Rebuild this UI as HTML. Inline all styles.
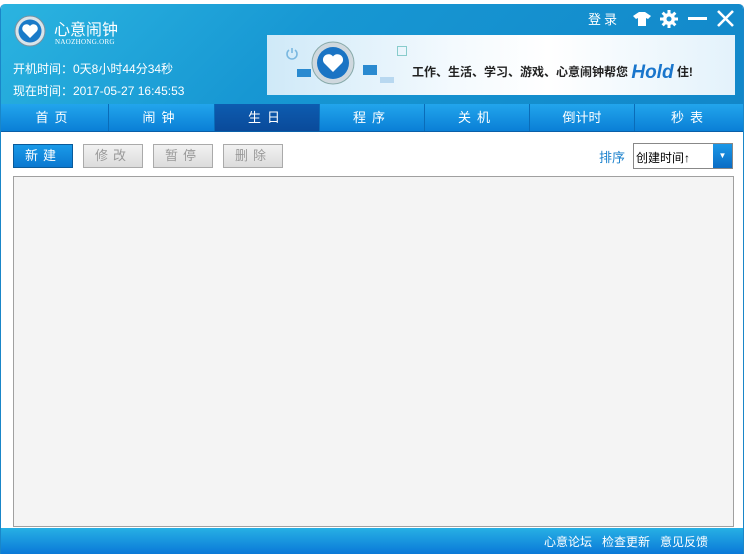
<!DOCTYPE html>
<html><head><meta charset="utf-8"><style>
*{margin:0;padding:0;box-sizing:border-box}
body{width:747px;height:560px;background:#fff;font-family:"Liberation Sans","Noto Sans CJK SC",sans-serif;font-size:12px;position:relative;overflow:hidden}
.win{position:absolute;left:0;top:4px;width:744px;height:550px;border-radius:5px 5px 0 0;overflow:hidden;background:#fff;border-left:1px solid #1a86c8;border-right:1px solid #1a86c8}
.hdr{position:absolute;left:0;top:0;width:100%;height:100px;background:linear-gradient(135deg,#2bb4e0 0%,#1797d3 40%,#1287c9 100%)}
.t{position:absolute;color:#fff;white-space:nowrap}
.banner{position:absolute;left:266px;top:31px;width:468px;height:60px;background:linear-gradient(90deg,#cfe9f8 0%,#f4fafe 40%,#ffffff 60%,#e3f2fb 100%)}
.tabs{position:absolute;left:0;top:100px;width:100%;height:28px;background:linear-gradient(#22a5ec,#0a7fd6);border-bottom:1px solid #0a5fa8}
.tab{position:absolute;top:0;height:27px;line-height:27px;text-align:center;color:#fff;font-size:13px;border-left:1px solid #0a6cb8;letter-spacing:6px}
.btn{position:absolute;top:140px;width:60px;height:24px;line-height:22px;text-align:center;border:1px solid #aaa;background:linear-gradient(#f2f2f2,#dcdcdc);color:#999;font-size:13px;letter-spacing:5px}
.foot{position:absolute;left:0;top:524px;width:100%;height:26px;background:linear-gradient(#27b0e4,#0a79d8)}
</style></head><body>
<div class="win">
<div class="hdr"></div>
<svg style="position:absolute;left:13px;top:11px" width="32" height="32"><circle cx="16" cy="16" r="15" fill="#d8e4ea" stroke="#7890a0"/><circle cx="16" cy="16" r="11.5" fill="#1a7ac8"/><path d="M16 23 L9 16 A3.6 3.6 0 0 1 16 11 A3.6 3.6 0 0 1 23 16 Z" fill="#fff"/></svg>
<div class="t" style="left:53px;top:12px;font-size:16px">心意闹钟</div>
<div class="t" style="left:54px;top:34px;font-size:7px;font-family:'Liberation Serif',serif;letter-spacing:0.3px">NAOZHONG.ORG</div>
<div class="t" style="left:12px;top:56px">开机时间：0天8小时44分34秒</div>
<div class="t" style="left:12px;top:78px">现在时间：2017-05-27 16:45:53</div>
<div class="t" style="left:587px;top:5px;font-size:13px;letter-spacing:3px">登录</div>
<svg style="position:absolute;left:632px;top:8px" width="18" height="14"><path d="M6 0 L12 0 L18 4 L15 7 L13 6 L13 14 L5 14 L5 6 L3 7 L0 4 Z" fill="#fff"/></svg>
<svg style="position:absolute;left:659px;top:6px" width="18" height="18" viewBox="0 0 18 18"><g fill="#fff"><circle cx="9" cy="9" r="6"/><rect x="7.5" y="0" width="3" height="18"/><rect x="0" y="7.5" width="18" height="3"/><rect x="7.5" y="0" width="3" height="18" transform="rotate(45 9 9)"/><rect x="7.5" y="0" width="3" height="18" transform="rotate(-45 9 9)"/></g><circle cx="9" cy="9" r="2.5" fill="#1a8fd0"/></svg>
<div style="position:absolute;left:687px;top:13px;width:19px;height:3px;background:#fff"></div>
<svg style="position:absolute;left:716px;top:6px" width="17" height="17"><path d="M1 1 L16 16 M16 1 L1 16" stroke="#fff" stroke-width="2.6"/></svg>
<div class="banner">
<svg style="position:absolute;left:44px;top:6px" width="44" height="44"><circle cx="22" cy="22" r="21" fill="#cfd8de" stroke="#8aa"/><circle cx="22" cy="22" r="16" fill="#1a74c4"/><path d="M22 31 L13 22 A4.8 4.8 0 0 1 22 15.5 A4.8 4.8 0 0 1 31 22 Z" fill="#fff"/></svg>
<svg style="position:absolute;left:18px;top:12px" width="14" height="14"><path d="M4 3 A5 5 0 1 0 10 3 M7 1 L7 6" stroke="#7ab8e0" stroke-width="1.6" fill="none"/></svg>
<div style="position:absolute;left:30px;top:34px;width:14px;height:8px;background:#2a8ad0"></div>
<div style="position:absolute;left:96px;top:30px;width:14px;height:10px;background:#2a8ad0"></div>
<div style="position:absolute;left:113px;top:42px;width:14px;height:6px;background:#b8d8f0"></div>
<div style="position:absolute;left:130px;top:11px;width:10px;height:10px;border:1px solid #8cc"></div>
<div style="position:absolute;left:145px;top:27px;font-size:12px;font-weight:bold;color:#222;white-space:nowrap">工作、生活、学习、游戏、心意闹钟帮您 <span style="color:#1a76cc;font-style:italic;font-size:19px;vertical-align:-2px">Hold</span> 住!</div>
</div>
<div class="tabs">
<div class="tab" style="left:0;width:107px;border-left:0">首页</div>
<div class="tab" style="left:107px;width:106px">闹钟</div>
<div class="tab" style="left:213px;width:105px;background:linear-gradient(#0d5cb0,#0a4a9a)">生日</div>
<div class="tab" style="left:318px;width:105px">程序</div>
<div class="tab" style="left:423px;width:105px">关机</div>
<div class="tab" style="left:528px;width:105px;letter-spacing:0">倒计时</div>
<div class="tab" style="left:633px;width:111px">秒表</div>
</div>
<div class="btn" style="left:12px;background:linear-gradient(#1a9ae8,#0a78d0);color:#fff;border-color:#0a5a9a">新建</div>
<div class="btn" style="left:82px">修改</div>
<div class="btn" style="left:152px">暂停</div>
<div class="btn" style="left:222px">删除</div>
<div class="t" style="left:598px;top:143px;color:#1a80cc;font-size:13px">排序</div>
<div style="position:absolute;left:632px;top:139px;width:100px;height:26px;border:1px solid #888;background:#fff"><span style="position:absolute;left:2px;top:5px;font-size:12px;color:#000">创建时间↑</span><div style="position:absolute;right:0;top:0;width:19px;height:24px;background:linear-gradient(#1a98e8,#0a6cc4);color:#fff;font-size:8px;text-align:center;line-height:24px">▼</div></div>
<div style="position:absolute;left:12px;top:172px;width:721px;height:351px;border:1px solid #a0a0a0;background:#f4f4f4"></div>
<div class="foot">
<div class="t" style="left:543px;top:5px;font-size:12px">心意论坛&nbsp;&nbsp;&nbsp;检查更新&nbsp;&nbsp;&nbsp;意见反馈</div>
</div>
</div>
</body></html>
